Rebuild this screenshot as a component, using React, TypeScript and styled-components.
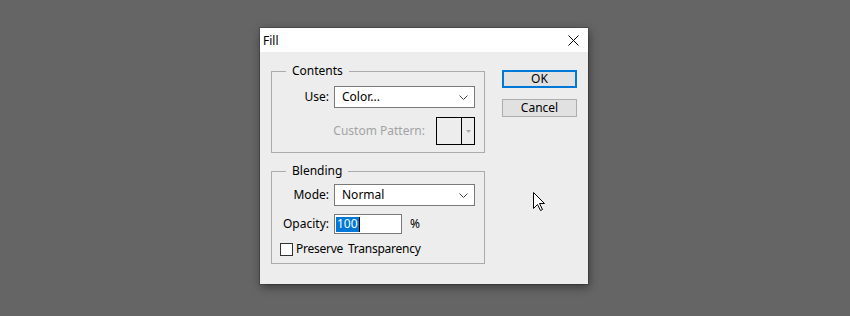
import React from "react";
import styled, { createGlobalStyle } from "styled-components";

const Global = createGlobalStyle`
  html, body { margin: 0; padding: 0; }
  body { background: #656565; font-family: "Noto Sans", "Liberation Sans", sans-serif; }
  * { box-sizing: border-box; }
`;

const Page = styled.div`
  position: relative;
  width: 850px;
  height: 316px;
  padding: 28px 0 0 260px;
  background: #656565;
  overflow: hidden;
`;

const Dialog = styled.div`
  width: 328px;
  height: 256px;
  background: #ededed;
  box-shadow: 0 0 0 1px rgba(0, 0, 0, 0.18), 1px 3px 9px rgba(0, 0, 0, 0.45);
  display: flex;
  flex-direction: column;
  font-size: 12px;
  color: #000;
`;

const TitleBar = styled.div`
  height: 24px;
  background: #fff;
  display: flex;
  align-items: center;
  justify-content: space-between;
  padding: 1px 9px 0 3px;
`;

const Title = styled.span`
  font-size: 12px;
  line-height: 14px;
`;

const Body = styled.div`
  display: flex;
  padding: 12px 11px 0 11px;
  gap: 17px;
`;

const LeftCol = styled.div`
  width: 214px;
  display: flex;
  flex-direction: column;
  gap: 11px;
`;

const RightCol = styled.div`
  width: 75px;
  display: flex;
  flex-direction: column;
  gap: 11px;
  padding-top: 6px;
`;

const Group = styled.fieldset`
  margin: 0;
  padding: 0;
  min-width: 0;
  border: 1px solid #ababab;
`;

const Legend = styled.legend`
  margin-left: 14px;
  padding: 0 6px;
  font-size: 12px;
  line-height: 14px;
`;

const GroupContent = styled.div<{ $pt: number; $pb: number; $gap: number }>`
  display: flex;
  flex-direction: column;
  gap: ${(p) => p.$gap}px;
  padding: ${(p) => p.$pt}px 9px ${(p) => p.$pb}px 0;
`;

const Row = styled.div<{ $end?: boolean }>`
  display: flex;
  align-items: center;
  justify-content: ${(p) => (p.$end ? "flex-end" : "flex-start")};
`;

const Label = styled.span`
  width: 57px;
  text-align: right;
  margin-right: 5px;
  line-height: 14px;
`;

const PatternLabel = styled.span`
  color: #a3a3a3;
  margin-right: 11px;
  line-height: 14px;
`;

const Select = styled.div`
  width: 141px;
  height: 22px;
  background: #fff;
  border: 1px solid #7a7a7a;
  display: flex;
  align-items: center;
  justify-content: space-between;
  padding: 0 6px 0 7px;
  line-height: 14px;
`;

const Swatch = styled.div`
  width: 39px;
  height: 28px;
  border: 1px solid #000;
  display: flex;
`;

const SwatchFill = styled.div`
  width: 25px;
  height: 100%;
  border-right: 1px solid #000;
`;

const SwatchArrow = styled.div`
  flex: 1;
  display: flex;
  align-items: center;
  justify-content: center;
`;

const TextInput = styled.div`
  width: 68px;
  height: 20px;
  background: #fff;
  border: 1px solid #7a7a7a;
  display: flex;
  align-items: center;
  padding-left: 1px;
  line-height: 14px;
`;

const Selection = styled.span`
  background: #0078d7;
  color: #fff;
  padding: 0 1px;
  height: 15px;
  display: inline-flex;
  align-items: center;
`;

const Caret = styled.span`
  width: 1px;
  height: 15px;
  background: #000;
`;

const Unit = styled.span`
  margin-left: 8px;
  line-height: 14px;
`;

const Checkbox = styled.span`
  width: 13px;
  height: 13px;
  margin-left: 8px;
  margin-right: 3px;
  background: #fff;
  border: 1px solid #333;
`;

const CheckText = styled.span`
  line-height: 14px;
  letter-spacing: -0.25px;
  word-spacing: 2px;
`;

const Button = styled.div<{ $default?: boolean }>`
  height: 18px;
  background: #e1e1e1;
  border: ${(p) => (p.$default ? "2px solid #0078d7" : "1px solid #adadad")};
  display: flex;
  align-items: center;
  justify-content: center;
  line-height: 14px;
`;

const Cursor = styled.svg`
  position: absolute;
  left: 533px;
  top: 192px;
`;

const Chevron = () => (
  <svg width="9" height="5" viewBox="0 0 9 5">
    <path d="M0.5 0.5 L4.5 4.5 L8.5 0.5" fill="none" stroke="#444" strokeWidth="1" />
  </svg>
);

export default function App() {
  return (
    <Page>
      <Global />
      <Dialog>
        <TitleBar>
          <Title>Fill</Title>
          <svg width="11" height="11" viewBox="0 0 11 11">
            <path d="M0.5 0.5 L10.5 10.5 M10.5 0.5 L0.5 10.5" stroke="#000" strokeWidth="1" />
          </svg>
        </TitleBar>
        <Body>
          <LeftCol>
            <Group>
              <Legend>Contents</Legend>
              <GroupContent $pt={8} $pb={7} $gap={9}>
                <Row>
                  <Label>Use:</Label>
                  <Select>
                    <span>Color...</span>
                    <Chevron />
                  </Select>
                </Row>
                <Row $end>
                  <PatternLabel>Custom Pattern:</PatternLabel>
                  <Swatch>
                    <SwatchFill />
                    <SwatchArrow>
                      <svg width="5" height="3" viewBox="0 0 5 3">
                        <path d="M0 0 L5 0 L2.5 3 Z" fill="#a8a8a8" />
                      </svg>
                    </SwatchArrow>
                  </Swatch>
                </Row>
              </GroupContent>
            </Group>
            <Group>
              <Legend>Blending</Legend>
              <GroupContent $pt={6} $pb={7} $gap={8}>
                <Row>
                  <Label>Mode:</Label>
                  <Select>
                    <span>Normal</span>
                    <Chevron />
                  </Select>
                </Row>
                <Row>
                  <Label>Opacity:</Label>
                  <TextInput>
                    <Selection>100</Selection>
                    <Caret />
                  </TextInput>
                  <Unit>%</Unit>
                </Row>
                <Row>
                  <Checkbox />
                  <CheckText>Preserve Transparency</CheckText>
                </Row>
              </GroupContent>
            </Group>
          </LeftCol>
          <RightCol>
            <Button $default>OK</Button>
            <Button>Cancel</Button>
          </RightCol>
        </Body>
      </Dialog>
      <Cursor width="13" height="20" viewBox="0 0 13 20">
        <path
          d="M0.5 0.5 L0.5 16.5 L4.5 12.5 L7.5 18.5 L9.5 17.5 L6.5 11.5 L11.5 11.5 Z"
          fill="#fff"
          stroke="#000"
          strokeWidth="1"
          strokeLinejoin="miter"
        />
      </Cursor>
    </Page>
  );
}
